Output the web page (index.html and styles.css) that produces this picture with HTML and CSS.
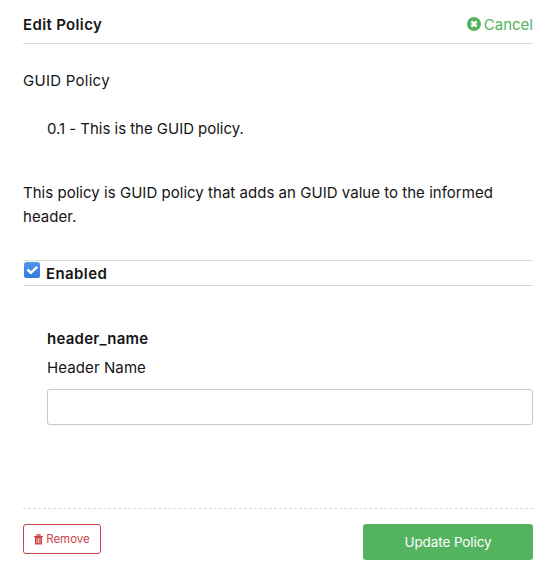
FILE: index.html
```html
<!DOCTYPE html>
<html lang="en">
<head>
<meta charset="utf-8">
<title>Edit Policy</title>
<link rel="stylesheet" href="styles.css">
</head>
<body>
<form class="policy">
  <header class="header">
    <h2 class="title">Edit Policy</h2>
    <a class="cancel"><svg class="cancel-icon" viewBox="0 0 14 14"><circle cx="7" cy="7" r="7" fill="currentColor"/><path d="M4.4 4.4l5.2 5.2M9.6 4.4l-5.2 5.2" stroke="#fff" stroke-width="2.6"/></svg><span>Cancel</span></a>
  </header>
  <p class="name">GUID Policy</p>
  <p class="summary">0.1 - This is the GUID policy.</p>
  <p class="description">This policy is GUID policy that adds an GUID value to the informed<br>header.</p>
  <label class="enabled"><svg class="check" viewBox="0 0 16 16"><defs><linearGradient id="blue" x2="0" y2="1"><stop stop-color="#5294ec"/><stop offset="1" stop-color="#2f7de0"/></linearGradient></defs><rect width="16" height="16" rx="2.5" fill="url(#blue)"/><path d="M3.5 7.5l3.3 3.3 6.5-6" fill="none" stroke="#fff" stroke-width="2.5"/></svg><span>Enabled</span></label>
  <div class="field">
    <label class="key" for="header">header_name</label>
    <p class="label">Header Name</p>
    <input class="input" id="header" type="text">
  </div>
  <footer class="footer">
    <button class="remove" type="button"><svg class="trash" viewBox="0 0 9 11"><path d="M0 2.5h9M3 2V.9h3V2" stroke="currentColor" stroke-width="1.2" fill="none"/><path d="M1 3h7v7.5H1z" fill="currentColor"/><path d="M3 4.2v5M4.5 4.2v5M6 4.2v5" stroke="#fff" stroke-width=".6"/></svg><span>Remove</span></button>
    <button class="update" type="button">Update Policy</button>
  </footer>
</form>
</body>
</html>
```
FILE: styles.css
```css
* { box-sizing: border-box; }
body { margin: 0; background: #fff; color: #151515; font: 15px/24px Inter, "Open Sans", sans-serif; }
p, h2 { margin: 0; }
.policy { padding: 13px 24px 0 23px; }
.header { display: flex; justify-content: space-between; height: 31px; border-bottom: 1px solid #d9d9d9; }
.title { font-size: 15px; line-height: 24px; font-weight: 600; letter-spacing: .35px; }
.cancel { display: flex; align-items: center; gap: 3px; height: 24px; color: #54b35e; }
.cancel-icon { width: 14px; height: 14px; margin-top: -2px; }
.name { margin-top: 25px; letter-spacing: .27px; }
.summary { margin: 24px 0 0 24px; letter-spacing: -.03px; }
.description { margin-top: 40px; letter-spacing: .03px; white-space: nowrap; }
.enabled { display: flex; gap: 6px; height: 26px; margin-top: 31px; padding: 1px 0 0 1px; border: solid #d9d9d9; border-width: 1px 0; font-weight: 600; letter-spacing: .4px; }
.check { width: 16px; height: 16px; }
.field { margin: 41px 0 0 24px; }
.key { display: block; font-weight: 600; letter-spacing: .24px; }
.label { margin-top: 5px; letter-spacing: .1px; }
.input { display: block; width: 100%; height: 36px; margin-top: 9px; border: 1px solid #c8c8c8; border-radius: 3px; }
.footer { display: flex; justify-content: space-between; margin-top: 83px; padding-top: 15px; border-top: 1px dashed #d9d9d9; }
button { font-family: inherit; padding: 0; }
.remove { display: flex; align-items: center; justify-content: center; gap: 3px; width: 78px; height: 30px; border: 1px solid #cb4349; border-radius: 3px; background: #fff; color: #cb4349; font-size: 11.5px; }
.trash { width: 9px; height: 11px; }
.update { width: 170px; height: 36px; border: 0; border-radius: 3px; background: #54b35e; color: #fff; font-size: 13.5px; letter-spacing: -.1px; }
```
